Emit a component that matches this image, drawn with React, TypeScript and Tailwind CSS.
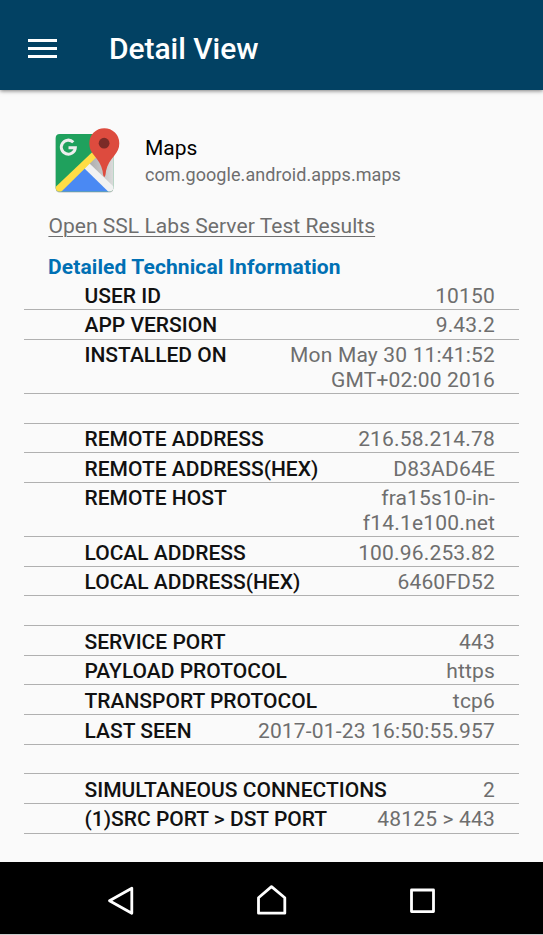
type Row = { label: string; value: string[] };

const rows: Row[] = [
  { label: "USER ID", value: ["10150"] },
  { label: "APP VERSION", value: ["9.43.2"] },
  { label: "INSTALLED ON", value: ["Mon May 30 11:41:52", "GMT+02:00 2016"] },
  { label: "", value: [] },
  { label: "REMOTE ADDRESS", value: ["216.58.214.78"] },
  { label: "REMOTE ADDRESS(HEX)", value: ["D83AD64E"] },
  { label: "REMOTE HOST", value: ["fra15s10-in-", "f14.1e100.net"] },
  { label: "LOCAL ADDRESS", value: ["100.96.253.82"] },
  { label: "LOCAL ADDRESS(HEX)", value: ["6460FD52"] },
  { label: "", value: [] },
  { label: "SERVICE PORT", value: ["443"] },
  { label: "PAYLOAD PROTOCOL", value: ["https"] },
  { label: "TRANSPORT PROTOCOL", value: ["tcp6"] },
  { label: "LAST SEEN", value: ["2017-01-23 16:50:55.957"] },
  { label: "", value: [] },
  { label: "SIMULTANEOUS CONNECTIONS", value: ["2"] },
  { label: "(1)SRC PORT > DST PORT", value: ["48125 > 443"] },
];

function MapsIcon() {
  return (
    <svg width="72" height="72" viewBox="0 0 72 72" className="shrink-0">
      <defs>
        <clipPath id="tile">
          <rect x="4.7" y="9" width="57.6" height="57.6" rx="4" />
        </clipPath>
        <linearGradient id="fold" x1="0" y1="0" x2="1" y2="0">
          <stop offset="0" stopColor="#a6a6a6" />
          <stop offset="1" stopColor="#dcdcdc" />
        </linearGradient>
      </defs>
      <rect x="4.7" y="10" width="57.6" height="57.6" rx="4" fill="#bdbdbd" />
      <g clipPath="url(#tile)">
        <rect x="4" y="9" width="59" height="58" fill="#1fa15d" />
        <path d="M35 41 L63 13 V68 Z" fill="url(#fold)" />
        <path d="M8 68 L33.3 42 L60 68 Z" fill="#4a89f3" />
        <path d="M33.3 43.3 L38.3 38.3 L64 63 L59 68.3 Z" fill="#f2f2f2" />
        <path d="M3 63.5 L44 24.5 L46.5 31 L9 68 L3 69 Z" fill="#ffdd45" />
      </g>
      <path
        d="M53.3 52 C52.2 51.5 52 49 51.6 46 C50.3 39.5 47 35 43.2 30.4 C40 26.5 38.3 23.5 38.3 18.2 A15 15 0 0 1 68.3 18.2 C68.3 23.5 66.3 27 63.4 30.4 C59.5 35 56.3 39.5 55 46 C54.6 49 54.4 51.5 53.3 52 Z"
        fill="#dd4b3e"
      />
      <circle cx="53.1" cy="18.2" r="5.4" fill="#7b2b27" />
      <path
        d="M22.3 17.2 A7 7 0 1 0 24.3 22.8 H17.5"
        fill="none"
        stroke="#eeeeee"
        strokeWidth="3"
      />
    </svg>
  );
}

export default function App() {
  return (
    <div className="flex h-[935px] w-[543px] flex-col overflow-hidden bg-[#fafafa] font-['Roboto',sans-serif]">
      <header className="flex h-[90px] shrink-0 items-center bg-[#024163] pt-2 pl-7 shadow-[0_1px_4px_rgba(0,0,0,0.5)]">
        <div className="mb-[2px] flex w-[81px] flex-col gap-[5px]">
          <span className="h-[3px] w-[29px] bg-white" />
          <span className="h-[3px] w-[29px] bg-white" />
          <span className="h-[3px] w-[29px] bg-white" />
        </div>
        <h1 className="text-[30px] leading-[36px] font-medium tracking-[-0.05px] text-white">Detail View</h1>
      </header>

      <main className="flex grow flex-col">
        <section className="flex h-[114px] items-start gap-[22px] pt-[35px] pl-[51px]">
          <MapsIcon />
          <div className="pt-[10px] whitespace-nowrap">
            <div className="text-[21px] leading-[26px] text-black">Maps</div>
            <div className="pt-px text-[18px] leading-[26px] tracking-[0.07px] text-[#6e6e6e]">com.google.android.apps.maps</div>
          </div>
        </section>
        <a className="mt-[9px] ml-[48.4px] h-[26px] w-fit text-[21px] leading-[26px] tracking-[0.05px] whitespace-nowrap text-[#6e6e6e] underline decoration-1 underline-offset-[3px]">
          Open SSL Labs Server Test Results
        </a>
        <h2 className="mt-[15px] ml-[48px] h-[26.3px] w-fit text-[21px] leading-[26px] font-bold tracking-[0.11px] whitespace-nowrap text-[#0070b4]">
          Detailed Technical Information
        </h2>
        <div className="mx-6 flex flex-col text-[21px] leading-[24.7px]">
          {rows.map((row, i) => (
            <div
              key={i}
              className={`flex justify-between border-b border-[#b0b0b0] pt-[3.4px] pr-[24px] pl-[60.5px] whitespace-nowrap ${
                row.value.length > 1 ? "h-[54.3px]" : "h-[29.67px]"
              }`}
            >
              <span className="font-medium text-[#111111]">{row.label}</span>
              <div className="text-right tracking-[0.17px] text-[#6e6e6e]">
                {row.value.map((line) => (
                  <div key={line}>{line}</div>
                ))}
              </div>
            </div>
          ))}
        </div>
      </main>

      <nav className="flex h-[73px] shrink-0 items-center justify-center border-b border-[#cccccc] bg-black">
        <svg width="543" height="72" viewBox="0 0 543 72" fill="none" stroke="#fff" strokeWidth="2.8" strokeLinejoin="round">
          <path d="M109.5 38.8 L131.8 26.3 V51.3 Z" />
          <path d="M258.5 35.8 L271.5 24.6 L284.8 35.8 V51.2 H258.5 Z" />
          <rect x="411.5" y="28" width="22" height="21.6" />
        </svg>
      </nav>
    </div>
  );
}
